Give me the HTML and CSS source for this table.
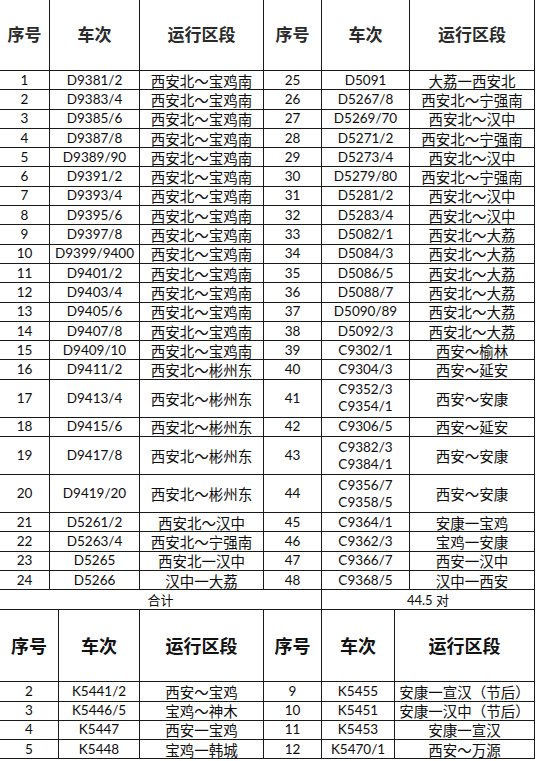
FILE: index.html
```html
<!DOCTYPE html>
<html lang="zh-CN">
<head>
<meta charset="utf-8">
<title>列车开行表</title>
<link rel="stylesheet" href="styles.css">
</head>
<body>
<table class="grid top">
  <colgroup>
    <col class="t1"><col class="t2"><col class="t3"><col class="t4"><col class="t5"><col class="t6">
  </colgroup>
  <thead>
    <tr class="head"><th>序号</th><th>车次</th><th>运行区段</th><th>序号</th><th>车次</th><th>运行区段</th></tr>
  </thead>
  <tbody>
    <tr><td>1</td><td>D9381/2</td><td class="z">西安北～宝鸡南</td><td>25</td><td>D5091</td><td class="z">大荔一西安北</td></tr>
    <tr><td>2</td><td>D9383/4</td><td class="z">西安北～宝鸡南</td><td>26</td><td>D5267/8</td><td class="z">西安北～宁强南</td></tr>
    <tr><td>3</td><td>D9385/6</td><td class="z">西安北～宝鸡南</td><td>27</td><td>D5269/70</td><td class="z">西安北～汉中</td></tr>
    <tr><td>4</td><td>D9387/8</td><td class="z">西安北～宝鸡南</td><td>28</td><td>D5271/2</td><td class="z">西安北～宁强南</td></tr>
    <tr><td>5</td><td>D9389/90</td><td class="z">西安北～宝鸡南</td><td>29</td><td>D5273/4</td><td class="z">西安北～汉中</td></tr>
    <tr><td>6</td><td>D9391/2</td><td class="z">西安北～宝鸡南</td><td>30</td><td>D5279/80</td><td class="z">西安北～宁强南</td></tr>
    <tr><td>7</td><td>D9393/4</td><td class="z">西安北～宝鸡南</td><td>31</td><td>D5281/2</td><td class="z">西安北～汉中</td></tr>
    <tr><td>8</td><td>D9395/6</td><td class="z">西安北～宝鸡南</td><td>32</td><td>D5283/4</td><td class="z">西安北～汉中</td></tr>
    <tr><td>9</td><td>D9397/8</td><td class="z">西安北～宝鸡南</td><td>33</td><td>D5082/1</td><td class="z">西安北～大荔</td></tr>
    <tr><td>10</td><td>D9399/9400</td><td class="z">西安北～宝鸡南</td><td>34</td><td>D5084/3</td><td class="z">西安北～大荔</td></tr>
    <tr><td>11</td><td>D9401/2</td><td class="z">西安北～宝鸡南</td><td>35</td><td>D5086/5</td><td class="z">西安北～大荔</td></tr>
    <tr><td>12</td><td>D9403/4</td><td class="z">西安北～宝鸡南</td><td>36</td><td>D5088/7</td><td class="z">西安北～大荔</td></tr>
    <tr><td>13</td><td>D9405/6</td><td class="z">西安北～宝鸡南</td><td>37</td><td>D5090/89</td><td class="z">西安北～大荔</td></tr>
    <tr><td>14</td><td>D9407/8</td><td class="z">西安北～宝鸡南</td><td>38</td><td>D5092/3</td><td class="z">西安北～大荔</td></tr>
    <tr><td>15</td><td>D9409/10</td><td class="z">西安北～宝鸡南</td><td>39</td><td>C9302/1</td><td class="z">西安～榆林</td></tr>
    <tr><td>16</td><td>D9411/2</td><td class="z">西安北～彬州东</td><td>40</td><td>C9304/3</td><td class="z">西安～延安</td></tr>
    <tr class="dbl"><td>17</td><td>D9413/4</td><td class="z">西安北～彬州东</td><td>41</td><td class="two">C9352/3<br>C9354/1</td><td class="z">西安～安康</td></tr>
    <tr><td>18</td><td>D9415/6</td><td class="z">西安北～彬州东</td><td>42</td><td>C9306/5</td><td class="z">西安～延安</td></tr>
    <tr class="dbl"><td>19</td><td>D9417/8</td><td class="z">西安北～彬州东</td><td>43</td><td class="two">C9382/3<br>C9384/1</td><td class="z">西安～安康</td></tr>
    <tr class="dbl"><td>20</td><td>D9419/20</td><td class="z">西安北～彬州东</td><td>44</td><td class="two">C9356/7<br>C9358/5</td><td class="z">西安～安康</td></tr>
    <tr><td>21</td><td>D5261/2</td><td class="z">西安北～汉中</td><td>45</td><td>C9364/1</td><td class="z">安康一宝鸡</td></tr>
    <tr><td>22</td><td>D5263/4</td><td class="z">西安北～宁强南</td><td>46</td><td>C9362/3</td><td class="z">宝鸡一安康</td></tr>
    <tr><td>23</td><td>D5265</td><td class="z">西安北一汉中</td><td>47</td><td>C9366/7</td><td class="z">西安一汉中</td></tr>
    <tr><td>24</td><td>D5266</td><td class="z">汉中一大荔</td><td>48</td><td>C9368/5</td><td class="z">汉中一西安</td></tr>
    <tr class="sum"><td colspan="4" class="z">合计</td><td colspan="2">44.5 <span class="z">对</span></td></tr>
  </tbody>
</table>
<table class="grid bottom">
  <colgroup>
    <col class="b1"><col class="b2"><col class="b3"><col class="b4"><col class="b5"><col class="b6">
  </colgroup>
  <thead>
    <tr class="head2"><th>序号</th><th>车次</th><th>运行区段</th><th>序号</th><th>车次</th><th>运行区段</th></tr>
  </thead>
  <tbody>
    <tr><td>2</td><td>K5441/2</td><td class="z">西安～宝鸡</td><td>9</td><td>K5455</td><td class="z">安康一宣汉（节后）</td></tr>
    <tr><td>3</td><td>K5446/5</td><td class="z">宝鸡～神木</td><td>10</td><td>K5451</td><td class="z">安康一汉中（节后）</td></tr>
    <tr><td>4</td><td>K5447</td><td class="z">西安一宝鸡</td><td>11</td><td>K5453</td><td class="z">安康一宣汉</td></tr>
    <tr><td>5</td><td>K5448</td><td class="z">宝鸡一韩城</td><td>12</td><td>K5470/1</td><td class="z">西安～万源</td></tr>
  </tbody>
</table>
</body>
</html>
```
FILE: styles.css
```css
html, body {
  margin: 0;
  padding: 0;
  background: #ffffff;
}

.grid {
  border-collapse: collapse;
  table-layout: fixed;
  width: 536px;
  margin-left: -1px;
  font-family: Lato, "Noto Sans CJK SC", sans-serif;
  font-size: 13.5px;
  color: #0d0d0d;
}

.grid td,
.grid th {
  border: 1px solid #1a1a1a;
  padding: 0;
  text-align: center;
  vertical-align: middle;
  white-space: nowrap;
  overflow: hidden;
  line-height: 17px;
}

.top { margin-top: -1px; }
.bottom { margin-top: -1px; }

.t1 { width: 50px; }
.t2 { width: 90px; }
.t3 { width: 124px; }
.t4 { width: 58px; }
.t5 { width: 88px; }
.t6 { width: 125px; }

.b1 { width: 59px; }
.b2 { width: 81px; }
.b3 { width: 124px; }
.b4 { width: 58px; }
.b5 { width: 73px; }
.b6 { width: 140px; }

.grid tbody tr { height: 19.3px; }
.grid tbody tr.dbl { height: 38px; }
.grid tbody tr.sum { height: 20px; }

.head { height: 71px; }
.head th {
  font-family: "Noto Sans CJK SC", sans-serif;
  font-weight: 700;
  font-size: 17px;
  color: #2a2a2a;
  padding-bottom: 3px;
}

.head2 { height: 72px; }
.head2 th {
  font-family: "Noto Sans CJK SC", sans-serif;
  font-weight: 700;
  font-size: 18px;
  color: #111;
}

.z {
  font-family: "Noto Sans CJK SC", sans-serif;
  font-size: 14.5px;
}

.sum td,
.sum .z {
  font-size: 13px;
  line-height: 16px;
}

.two { line-height: 19px; }
```
